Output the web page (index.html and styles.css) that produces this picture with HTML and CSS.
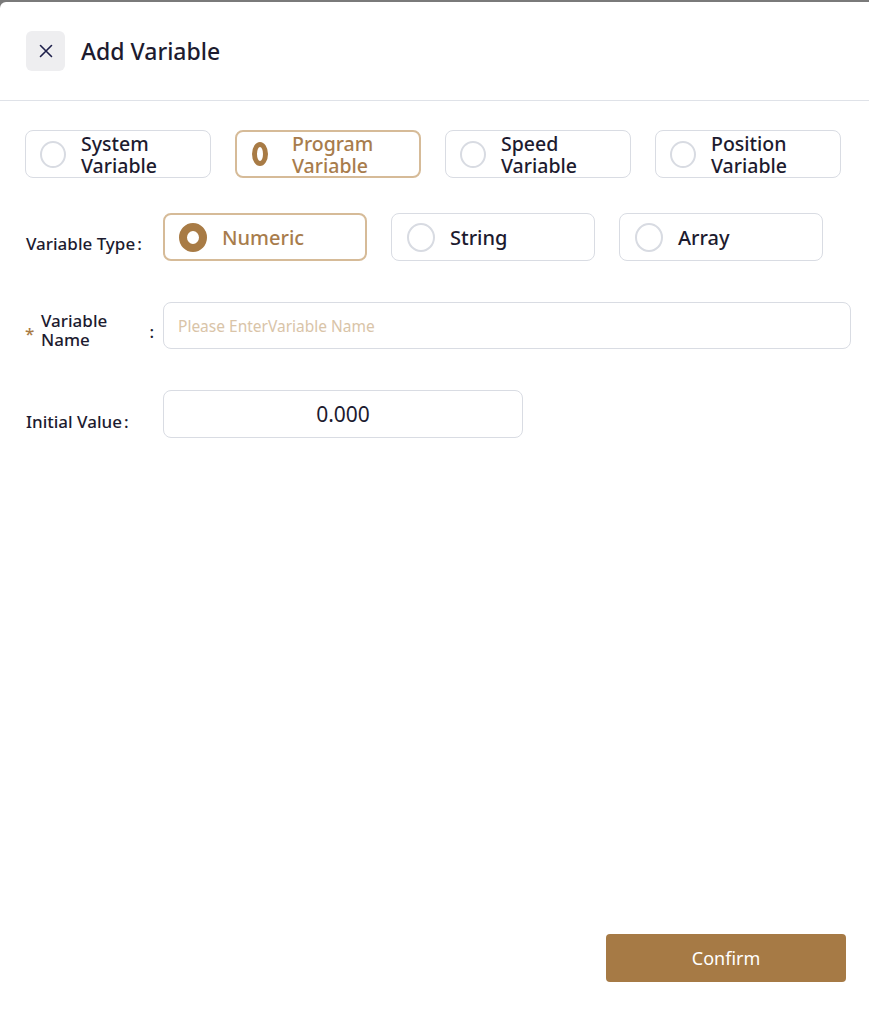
FILE: index.html
```html
<!DOCTYPE html>
<html>
<head>
<meta charset="utf-8">
<link rel="stylesheet" href="styles.css">
</head>
<body>
<div class="dialog">
  <header class="head">
    <button class="close" aria-label="Close">
      <svg width="14" height="14" viewBox="0 0 14 14"><path d="M1.5 1.5 L12.5 12.5 M12.5 1.5 L1.5 12.5" stroke="#1d1f4a" stroke-width="1.6" fill="none" stroke-linecap="round"/></svg>
    </button>
    <h1 class="title">Add Variable</h1>
  </header>
  <main class="body">
    <div class="scope">
      <div class="opt"><span class="dot"></span><span class="txt">System<br>Variable</span></div>
      <div class="opt on"><span class="dot dot-squeeze"></span><span class="txt">Program<br>Variable</span></div>
      <div class="opt"><span class="dot"></span><span class="txt">Speed<br>Variable</span></div>
      <div class="opt"><span class="dot"></span><span class="txt">Position<br>Variable</span></div>
    </div>

    <div class="row row-type">
      <label class="lbl">Variable Type<span class="colon">:</span></label>
      <div class="types">
        <div class="topt on"><span class="tdot"></span><span class="ttxt">Numeric</span></div>
        <div class="topt"><span class="tdot"></span><span class="ttxt">String</span></div>
        <div class="topt"><span class="tdot"></span><span class="ttxt">Array</span></div>
      </div>
    </div>

    <div class="row row-name">
      <label class="lbl lbl-req"><span class="star">*</span><span class="lbl-text">Variable Name</span><span class="colon2">:</span></label>
      <input class="field field-wide" type="text" placeholder="Please EnterVariable Name">
    </div>

    <div class="row row-init">
      <label class="lbl">Initial Value<span class="colon">:</span></label>
      <input class="field field-num" type="text" value="0.000">
    </div>
  </main>
  <footer class="foot">
    <button class="confirm">Confirm</button>
  </footer>
</div>
</body>
</html>
```

FILE: styles.css
```css
* { box-sizing: border-box; }
html, body { margin: 0; padding: 0; background: #7a7a7a; }
body {
  font-family: "Noto Sans", "Open Sans", sans-serif;
  color: #1d1b2f;
  padding-top: 2px;
}
.dialog {
  background: #fff;
  height: 1027px;
  border-top-left-radius: 6px;
  display: flex;
  flex-direction: column;
}
.head {
  height: 99px;
  display: flex;
  align-items: center;
  padding-left: 26px;
  border-bottom: 1px solid #dfe2e8;
}
.close {
  width: 39px;
  height: 40px;
  border: none;
  border-radius: 6px;
  background: #eeeef0;
  display: flex;
  align-items: center;
  justify-content: center;
  padding: 0;
}
.title {
  margin: 0 0 0 16px;
  font-size: 23px;
  font-weight: 500;
  color: #1d1b2f;
  letter-spacing: 0;
}
.body {
  flex: 1;
  padding: 29px 18px 0 25px;
}
.scope {
  display: grid;
  grid-template-columns: repeat(4, 186px);
  column-gap: 24px;
}
.opt {
  height: 48px;
  border: 1px solid #d9dce3;
  border-radius: 8px;
  display: flex;
  align-items: center;
  padding-left: 14px;
}
.opt .dot {
  width: 26px;
  height: 27px;
  border: 2px solid #d8dbe2;
  border-radius: 50%;
  flex: none;
}
.opt .txt {
  margin-left: 15px;
  font-size: 19.5px;
  line-height: 22px;
  font-weight: 500;
  color: #1d1b2f;
  padding-top: 1px;
}
.opt.on { border: 2px solid #d6bb98; padding-left: 15px; }
.opt.on .txt { color: #a87c4c; margin-left: 24px; }
.opt .dot-squeeze {
  width: 16px;
  height: 24px;
  border: 5px solid #a87b45;
  background: #fff;
}

.row { display: flex; align-items: center; }
.lbl {
  width: 138px;
  flex: none;
  font-size: 17px;
  font-weight: 500;
  color: #1d1b2f;
  padding-left: 1px;
}
.colon { margin-left: 2px; }
.row-type { margin-top: 35px; }
.row-type .lbl { padding-top: 12px; }
.types {
  display: grid;
  grid-template-columns: repeat(3, 204px);
  column-gap: 24px;
}
.topt {
  height: 48px;
  border: 1px solid #d9dce3;
  border-radius: 8px;
  display: flex;
  align-items: center;
  padding-left: 15px;
}
.tdot {
  width: 28px;
  height: 29px;
  border: 2px solid #d8dbe2;
  border-radius: 50%;
  flex: none;
}
.ttxt {
  margin-left: 15px;
  font-size: 20px;
  font-weight: 500;
  color: #1d1b2f;
}
.topt.on { border: 2px solid #d6bb98; padding-left: 14px; }
.topt.on .tdot { border: 8px solid #a87b45; }
.topt.on .ttxt { color: #a87c4c; }

.row-name { margin-top: 41px; align-items: flex-start; }
.lbl-req {
  display: flex;
  align-items: center;
  padding-left: 0;
  padding-right: 9px;
  margin-top: 9px;
}
.star { color: #a87b45; font-size: 17px; width: 16px; padding-top: 6px; }
.lbl-text { flex: 1; line-height: 19px; width: 80px; }
.colon2 { padding-top: 3px; }
.field {
  height: 47px;
  border: 1px solid #d9dce3;
  border-radius: 8px;
  font-family: inherit;
  outline: none;
  background: #fff;
  flex: none;
}
.field-wide {
  width: 688px;
  padding: 0 14px;
  font-size: 15.5px;
  color: #1d1b2f;
}
.field-wide::placeholder { color: #d9c4a8; }
.row-init { margin-top: 41px; }
.row-init .lbl { padding-top: 14px; }
.field-num {
  width: 360px;
  height: 48px;
  text-align: center;
  font-size: 21px;
  color: #1d1b2f;
}
.foot {
  display: flex;
  justify-content: flex-end;
  padding: 0 23px 47px 0;
}
.confirm {
  width: 240px;
  height: 48px;
  border: none;
  border-radius: 4px;
  background: #a67a45;
  color: #fff;
  font-family: inherit;
  font-size: 18px;
}
```
